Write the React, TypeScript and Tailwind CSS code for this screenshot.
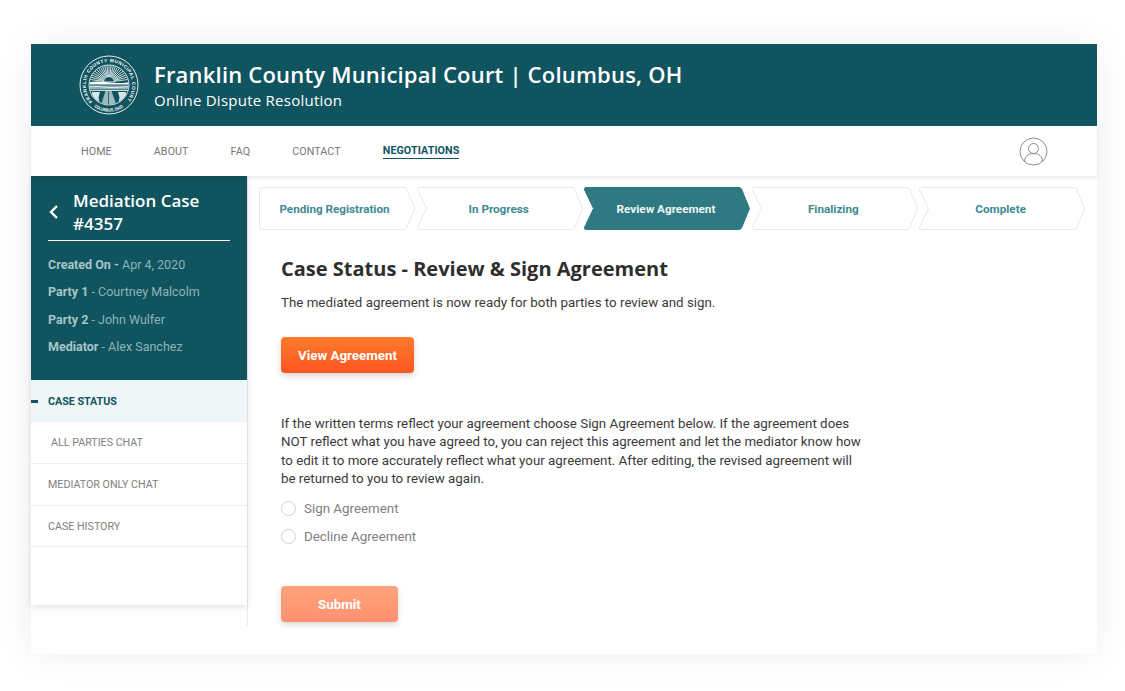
import React from 'react';

const NAV = ['HOME', 'ABOUT', 'FAQ', 'CONTACT'];
const STEPS = ['Pending Registration', 'In Progress', 'Review Agreement', 'Finalizing', 'Complete'];
const ACTIVE_STEP = 2;

const Seal: React.FC = () => {
  const rays = Array.from({ length: 23 }, (_, i) => (Math.PI * (i + 1)) / 24);
  return (
    <svg width="60" height="60" viewBox="0 0 60 60" className="shrink-0">
      <circle cx="30" cy="30" r="29" fill="none" stroke="#fff" strokeWidth="0.9" />
      <circle cx="30" cy="30" r="20" fill="none" stroke="#fff" strokeWidth="0.8" />
      <defs>
        <path id="sealTop" d="M 13.5 46.5 A 23.2 23.2 0 1 1 46.5 46.5" />
        <path id="sealBottom" d="M 15 52 A 26.6 26.6 0 0 0 45 52" />
        <clipPath id="sealInner">
          <circle cx="30" cy="30" r="19.5" />
        </clipPath>
      </defs>
      <text fontSize="4.7" fill="#fff" fontFamily="'Liberation Sans', sans-serif" fontWeight="700">
        <textPath href="#sealTop" textLength="106" lengthAdjust="spacing">FRANKLIN COUNTY MUNICIPAL COURT</textPath>
        <textPath href="#sealBottom" textLength="31" lengthAdjust="spacingAndGlyphs">COLUMBUS, OHIO</textPath>
      </text>
      <g clipPath="url(#sealInner)">
        {rays.map((a, i) => (
          <line
            key={i}
            x1={30 + 6 * Math.cos(a)}
            y1={27 - 6 * Math.sin(a)}
            x2={30 + 19 * Math.cos(a)}
            y2={27 - 19 * Math.sin(a)}
            stroke="#fff"
            strokeWidth="0.8"
          />
        ))}
        <path d="M24.5 27a5.5 5.5 0 0 1 11 0z" fill="#10545f" stroke="#fff" strokeWidth="0.9" />
        <path d="M9 27.5c7-1.5 14-1 21 0s14 .5 21-.5v2.5H9z" fill="#fff" />
        <path d="M9 30.5h42v4H9z" fill="#fff" opacity="0.55" />
        <path d="M9 32c8-1.500 14 0 21 .5s14-.5 21-1" stroke="#fff" strokeWidth="0.7" fill="none" />
        <path d="M9 35.500h42" stroke="#fff" strokeWidth="0.8" />
        <path d="M26.500 36h6l5 14H22z" fill="#fff" opacity="0.6" />
        <path d="M29.500 36v14" stroke="#10545f" strokeWidth="0.8" />
        <path d="M13 37h8l-1.500 5.500L21 50h-4c-3-3-4-8-4-13zM47 37h-8l1.500 5.500L39 50h4c3-3 4-8 4-13z" fill="#fff" opacity="0.85" />
      </g>
    </svg>
  );
};

const Step: React.FC<{ label: string; first: boolean; active: boolean }> = ({ label, first, active }) => {
  const d = first
    ? 'M3.5 0.5H145a3 3 0 0 1 2.500 1.500L156 21.500 147.500 41a3 3 0 0 1-2.500 1.500H3.500a3 3 0 0 1-3-3V3.500a3 3 0 0 1 3-3z'
    : 'M3 0.500H156a3 3 0 0 1 2.500 1.500L166.500 21.500 158.500 41a3 3 0 0 1-2.500 1.500H3a1.500 1.500 0 0 1-1.500-2.200L10.500 21.500 1.500 2.700A1.500 1.500 0 0 1 3 0.500z';
  return (
    <div className={`relative flex h-[43px] items-center justify-center ${first ? 'w-[157px]' : 'w-[167.33px]'}`}>
      <svg className="absolute inset-0" width={first ? 157 : 168} height="43" fill="none">
        <path d={d} fill={active ? '#2f7a82' : '#fff'} stroke={active ? '#2f7a82' : '#e8e8e8'} />
      </svg>
      <span className={`relative pt-[2px] text-[11.7px] font-bold ${first ? 'pr-[6px]' : 'pr-[2px]'} ${active ? 'text-[#eef6f6]' : 'text-[#3d8a93]'}`}>
        {label}
      </span>
    </div>
  );
};

const App: React.FC = () => {
  return (
    <div className="h-[691px] w-[1125px] overflow-hidden bg-white pl-[31px] pt-[44px] font-['Roboto',sans-serif]">
      <div className="h-[610px] w-[1066px] bg-white shadow-[0_0_36px_rgba(0,0,0,0.07)]">
        {/* Court banner */}
        <div className="flex h-[82px] items-center bg-[#10545f] pl-[48px] pr-4">
          <Seal />
          <div className="ml-[15px] font-['Open_Sans',sans-serif] text-white">
            <div className="text-[22px] font-semibold leading-[28px] tracking-[0.2px]">
              Franklin County Municipal Court | Columbus, OH
            </div>
            <div className="pt-px text-[15px] font-normal leading-[22px] tracking-[0.25px]">Online Dispute Resolution</div>
          </div>
        </div>

        {/* Nav */}
        <div className="relative z-10 flex h-[50px] items-center justify-between bg-white pl-[50px] pr-[49px] shadow-[0_2px_4px_rgba(0,0,0,0.09)]">
          <div className="flex items-center gap-[42px] pt-[2px] text-[10.7px] tracking-[0.1px]">
            {NAV.map((item) => (
              <span key={item} className="text-[#777]">{item}</span>
            ))}
            <span className="border-b border-[#10545f] pb-px font-bold leading-[13px] text-[#10545f]">NEGOTIATIONS</span>
          </div>
          <svg width="29" height="29" viewBox="0 0 29 29" fill="none" stroke="#8c8c8c" strokeWidth="1">
            <circle cx="14.5" cy="14.5" r="13.5" />
            <circle cx="14.5" cy="11.5" r="5" />
            <path d="M5.5 24.5c0-5 3.5-8 9-8s9 3 9 8" />
          </svg>
        </div>

        <div className="flex">
          {/* Sidebar */}
          <div className="h-[450px] w-[217px] shrink-0 border-r border-[#ececec]">
            <div className="relative h-[429px] w-[216px] bg-white shadow-[0_2px_6px_rgba(0,0,0,0.12)]">
              <div className="h-[204px] bg-[#10545f] pl-[17px] pr-[17px] pt-[14px]">
                <div className="flex h-[51px] items-center border-b border-white pb-[6px]">
                  <svg width="11" height="16" viewBox="0 0 11 16" fill="none" stroke="#fff" strokeWidth="2.4" className="shrink-0">
                    <path d="M9 2 3 8l6 6" />
                  </svg>
                  <div className="ml-[14px] font-['Open_Sans',sans-serif] text-[17px] font-semibold leading-[23px] text-white">
                    Mediation Case<br />#4357
                  </div>
                </div>
                <div className="mt-[10px] text-[12.5px] leading-[27.4px] text-[#8fb3b8]">
                  <div><b className="font-bold text-[#a8c4c8]">Created On -</b> Apr 4, 2020</div>
                  <div><b className="font-bold text-[#a8c4c8]">Party 1</b> - Courtney Malcolm</div>
                  <div><b className="font-bold text-[#a8c4c8]">Party 2</b> - John Wulfer</div>
                  <div><b className="font-bold text-[#a8c4c8]">Mediator</b> - Alex Sanchez</div>
                </div>
              </div>
              <div className="relative flex h-[42px] items-center bg-[#eef6f8] pl-[17px] pt-[2px] text-[10.7px] font-bold text-[#10545f]">
                <span className="absolute left-0 top-[20px] h-[3px] w-[7px] bg-[#10545f]" />
                CASE STATUS
              </div>
              <div className="flex h-[42px] items-center border-b border-[#eeeeee] pl-[20px] pt-[2px] text-[10.7px] text-[#808080]">ALL PARTIES CHAT</div>
              <div className="flex h-[42px] items-center border-b border-[#eeeeee] pl-[17px] pt-[2px] text-[10.7px] text-[#808080]">MEDIATOR ONLY CHAT</div>
              <div className="flex h-[41px] items-center border-b border-[#eeeeee] pl-[17px] pt-[2px] text-[10.7px] text-[#808080]">CASE HISTORY</div>
            </div>
          </div>

          {/* Main */}
          <div className="min-w-0 flex-1 pl-[11px] pt-[11px]">
            <div className="flex">
              {STEPS.map((s, i) => (
                <Step key={s} label={s} first={i === 0} active={i === ACTIVE_STEP} />
              ))}
            </div>
            <div className="pl-[22px]">
              <h2 className="mt-[24px] font-['Open_Sans',sans-serif] text-[20px] font-bold leading-[30px] text-[#2e2e2e]">
                Case Status - Review &amp; Sign Agreement
              </h2>
              <p className="mt-[10px] text-[13.33px] leading-[18px] text-[#3a3a3a]">
                The mediated agreement is now ready for both parties to review and sign.
              </p>
              <button className="mt-[25px] block h-[36px] w-[133px] rounded-[4px] bg-gradient-to-b from-[#ff7a2b] to-[#ff5522] pt-[2px] text-[13.33px] font-bold text-white shadow-[0_3px_6px_rgba(0,0,0,0.16)]">
                View Agreement
              </button>
              <p className="mt-[42px] w-[582px] text-[13.33px] leading-[18.3px] text-[#3a3a3a]">
                If the written terms reflect your agreement choose Sign Agreement below. If the agreement does NOT reflect what you have agreed to, you can reject this agreement and let the mediator know how to edit it to more accurately reflect what your agreement. After editing, the revised agreement will be returned to you to review again.
              </p>
              <div className="mt-[12px] flex h-[16px] items-center gap-[8px] text-[13.33px] text-[#808080]">
                <span className="h-[15px] w-[15px] rounded-full border border-[#d2d2d2]" />
                <span className="pt-[2px]">Sign Agreement</span>
              </div>
              <div className="mt-[12px] flex h-[16px] items-center gap-[8px] text-[13.33px] text-[#808080]">
                <span className="h-[15px] w-[15px] rounded-full border border-[#d2d2d2]" />
                <span className="pt-[2px]">Decline Agreement</span>
              </div>
              <button className="mt-[42px] block h-[36px] w-[117px] rounded-[4px] bg-gradient-to-b from-[#ffa47d] to-[#ff9070] pt-[2px] text-[13.33px] font-bold text-white shadow-[0_3px_6px_rgba(0,0,0,0.14)]">
                Submit
              </button>
            </div>
          </div>
        </div>
      </div>
    </div>
  );
};

export default App;
